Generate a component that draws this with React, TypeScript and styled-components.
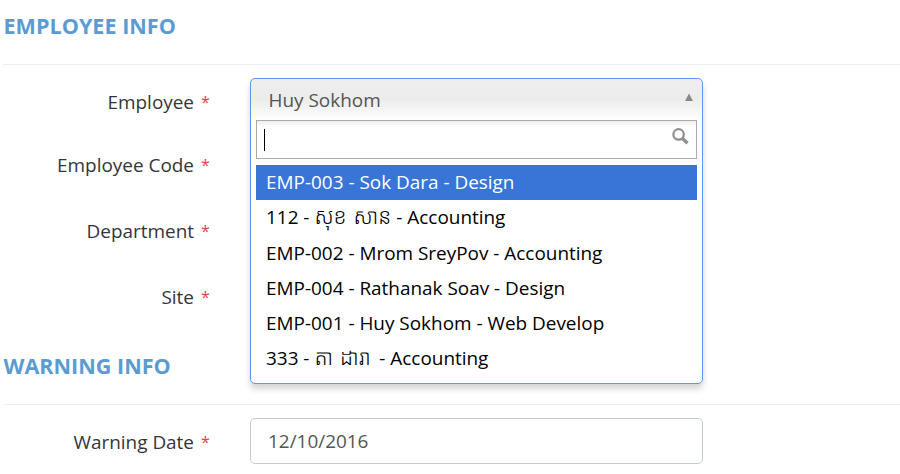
import React from "react";
import styled, { createGlobalStyle } from "styled-components";

const GlobalStyle = createGlobalStyle`
  * { box-sizing: border-box; }
  body {
    margin: 0;
    background: #fff;
    overflow: hidden;
    font-family: "Open Sans", "Noto Sans Khmer", "Noto Sans", sans-serif;
    font-size: 18.93px;
    color: #34353b;
  }
`;

const Page = styled.main`
  width: 900px;
  height: 474px;
  overflow: hidden;
`;

const Section = styled.section`
  height: 340px;
`;

const Heading = styled.h2`
  margin: 0 0 0 3px;
  height: 65px;
  padding: 11px 0 0 0.5px;
  border-bottom: 1px solid #e9edf4;
  color: #5c9bd1;
  font-size: 21.6px;
  line-height: 30px;
  font-weight: 700;
`;

const Row = styled.div<{ $height: number; $top: number }>`
  display: grid;
  grid-template-columns: 210px 453px;
  column-gap: 40px;
  height: ${(p) => p.$height}px;
  padding-top: ${(p) => p.$top}px;
`;

const Label = styled.label`
  display: flex;
  justify-content: flex-end;
  gap: 7px;
  height: 26px;
  margin-top: 11px;
  line-height: 26px;
  white-space: nowrap;
`;

const Required = styled.span`
  width: 9px;
  color: #e73d4a;
  font-size: 16px;
`;

const Select = styled.div`
  position: relative;
  height: 46px;
`;

const Dropdown = styled.div`
  position: absolute;
  z-index: 2;
  top: 0;
  left: 0;
  width: 453px;
  height: 306px;
  border: 1px solid #5897fb;
  border-radius: 5px;
  background: #fff linear-gradient(to bottom, #eee 0, #ececec 20px, #fff 42px) no-repeat;
  box-shadow: 0 5px 6px rgba(0, 0, 0, 0.17);
`;

const Current = styled.div`
  display: flex;
  justify-content: space-between;
  height: 41px;
  padding: 8px 8px 0 17.5px;
  line-height: 27px;
  color: #555;
  svg { margin-top: 5px; }
`;

const SearchBox = styled.div`
  display: flex;
  justify-content: space-between;
  width: 441px;
  height: 39px;
  margin: 0 5px 6px;
  padding: 7px 6px 0 7px;
  border: 1px solid #aaa;
  background: linear-gradient(to bottom, #eee 0, #fff 6px);
`;

const Caret = styled.span`
  width: 1px;
  height: 22px;
  margin-top: 1px;
  background: #000;
`;

const Options = styled.ul`
  list-style: none;
  margin: 0 5px;
  padding: 0;
`;

const Option = styled.li<{ $active?: boolean }>`
  height: 35.3px;
  padding-left: 10px;
  line-height: 34px;
  white-space: pre;
  color: ${(p) => (p.$active ? "#fff" : "#000")};
  background: ${(p) => (p.$active ? "#3875d7" : "transparent")};
`;

const Khmer = styled.span<{ $width: number }>`
  display: inline-block;
  width: ${(p) => p.$width}px;
  height: 34px;
  vertical-align: top;
  line-height: 32px;
  white-space: nowrap;
  font-size: 21.2px;
  font-weight: 300;
  word-spacing: 1.5px;
`;

const DateField = styled.div`
  height: 46px;
  padding-left: 17px;
  border: 1px solid #c2cad8;
  border-radius: 5px;
  line-height: 44px;
  color: #555;
`;

const Field = ({ label, height, top, children }: {
  label: string; height: number; top: number; children?: React.ReactNode;
}) => (
  <Row $height={height} $top={top}>
    <Label>{label}<Required>*</Required></Label>
    {children}
  </Row>
);

const SearchIcon = () => (
  <svg width="19" height="19" viewBox="0 0 19 19" fill="none" stroke="#909090">
    <circle cx="7.6" cy="6.4" r="5.2" strokeWidth="2.3" />
    <path d="M11.2 10.2 16.5 15.3" strokeWidth="3.4" />
  </svg>
);

export default function App() {
  return (
    <>
      <GlobalStyle />
      <Page>
        <Section>
          <Heading>EMPLOYEE INFO</Heading>
          <Field label="Employee" height={76} top={13}>
            <Select>
              <Dropdown>
                <Current>
                  Huy Sokhom
                  <svg width="10" height="12" viewBox="0 0 10 12"><path d="M5 1.5 9 9H1Z" fill="#888" /></svg>
                </Current>
                <SearchBox><Caret /><SearchIcon /></SearchBox>
                <Options>
                  <Option $active>EMP-003 - Sok Dara - Design</Option>
                  <Option>112 - <Khmer $width={77}>សុខ សាន</Khmer> - Accounting</Option>
                  <Option>EMP-002 - Mrom SreyPov - Accounting</Option>
                  <Option>EMP-004 - Rathanak Soav - Design</Option>
                  <Option>EMP-001 - Huy Sokhom - Web Develop</Option>
                  <Option>333 - <Khmer $width={60}>តា ដារា</Khmer> - Accounting</Option>
                </Options>
              </Dropdown>
            </Select>
          </Field>
          <Field label="Employee Code" height={66} top={0} />
          <Field label="Department" height={66} top={0} />
          <Field label="Site" height={66} top={0} />
        </Section>
        <Section>
          <Heading>WARNING INFO</Heading>
          <Field label="Warning Date" height={69} top={13}>
            <DateField>12/10/2016</DateField>
          </Field>
        </Section>
      </Page>
    </>
  );
}
